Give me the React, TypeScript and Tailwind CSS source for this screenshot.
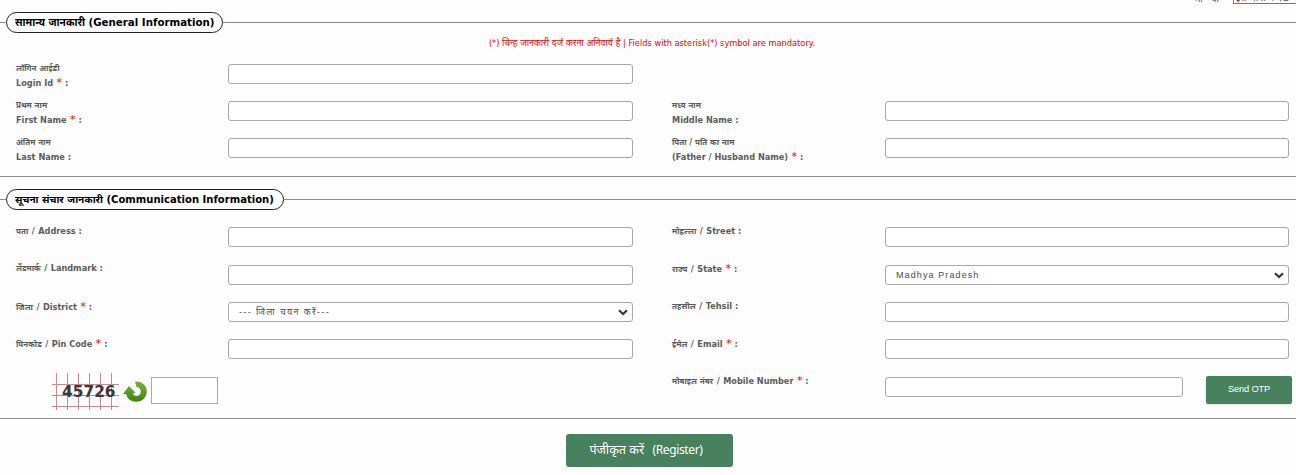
import type { ReactNode } from "react";

const FONT = "font-['DejaVu_Sans','Noto_Sans',sans-serif]";
const ROW = "grid grid-cols-[212px_444px_213px_404px] pl-4";

type LabelProps = {
	hindi: string;
	english: string;
	required?: boolean;
	className?: string;
};

function Mark({ required }: { required?: boolean }) {
	return (
		<>
			{required && (
				<span className="ml-[3.5px] text-[11px] font-normal leading-none text-[#e00]">*</span>
			)}
			{" :"}
		</>
	);
}

function StackedLabel({ hindi, english, required, className = "-mt-[2px]" }: LabelProps) {
	return (
		<label
			className={`flex flex-col whitespace-nowrap text-[8.2px] font-bold text-[#5c5c5c] ${className}`}
		>
			<span className="text-[8px] leading-[14px]">{hindi}</span>
			<span className="-mt-px leading-4">
				{english}
				<Mark required={required} />
			</span>
		</label>
	);
}

function Label({ hindi, english, required, className = "-mt-[4px]" }: LabelProps) {
	return (
		<label
			className={`block whitespace-nowrap text-[8.2px] font-bold leading-4 text-[#5c5c5c] ${className}`}
		>
			<span className="text-[8px]">{hindi}</span>
			<span className="mx-[3.5px]">/</span>
			{english}
			<Mark required={required} />
		</label>
	);
}

function TextInput({ className = "w-[405px]" }: { className?: string }) {
	return (
		<input
			type="text"
			className={`block h-5 rounded-[3px] border border-[#a9a9a9] bg-white ${className}`}
		/>
	);
}

function SelectInput({ className, children }: { className: string; children: ReactNode }) {
	return (
		<div
			className={`flex h-5 items-center justify-between rounded-[3px] border border-[#a9a9a9] bg-white pr-[4px] pl-[10px] ${className}`}
		>
			<span className="whitespace-pre font-['Liberation_Sans','Noto_Sans',sans-serif] text-[9px] leading-none text-[#4a4a4a]">
				{children}
			</span>
			<svg width="10" height="7" viewBox="0 0 10 7" fill="none" stroke="#333" strokeWidth="2">
				<path d="M1 1.2 5 5 9 1.2" />
			</svg>
		</div>
	);
}

function Legend({ className, children }: { className: string; children: ReactNode }) {
	return (
		<div className="flex h-[21px] items-center">
			<div className="h-px w-[6px] bg-[#8c8c8c]" />
			<h2
				className={`flex h-[21px] items-center whitespace-nowrap rounded-full border border-[#222] pl-2 font-bold text-black ${className}`}
			>
				{children}
			</h2>
			<div className="h-px flex-1 bg-[#8c8c8c]" />
		</div>
	);
}

function ReloadIcon() {
	return (
		<svg width="24" height="21" viewBox="0 0 24 21">
			<defs>
				<linearGradient id="reload" x1="0" y1="0" x2="0" y2="1">
					<stop offset="0" stopColor="#7cb342" />
					<stop offset="1" stopColor="#3d8212" />
				</linearGradient>
			</defs>
			<path
				fill="url(#reload)"
				d="M12 .5C19 -.3 23.800 4.500 23.800 10.400S19.300 20.700 13.500 20.700C8 20.700 4.200 17.600 3.200 13.200L0 13 6 5l6.500 6.800-2.700.8c.6 1.500 2 2.300 3.700 2.300 2.500 0 4.300-1.900 4.300-4.400 0-2.600-1.900-4.300-4.300-4.400z"
			/>
		</svg>
	);
}

function Captcha() {
	return (
		<div className="flex h-[38px] items-center pt-[1px] pl-[52px]">
			<div className="relative h-[37px] w-[67px]">
				<svg width="67" height="37" className="block" stroke="#c98a8f" strokeWidth="1">
					<path d="M0 11.500H67M0 22.500H67M0 33.500H67M4.500 0V37M15.500 0V37M26.500 0V37M37.500 0V37M48.500 0V37M59.500 0V37" />
				</svg>
				<span className="absolute top-[10px] left-[10px] text-[15.4px] font-bold leading-[19px] text-[#3a3a3a]">
					45726
				</span>
			</div>
			<div className="ml-1">
				<ReloadIcon />
			</div>
			<input
				type="text"
				className="-mt-[2px] ml-[4px] h-[27px] w-[67px] border border-[#a9a9a9] bg-white"
			/>
		</div>
	);
}

export default function App() {
	return (
		<main className={`h-[475px] w-[1296px] overflow-hidden bg-[#fdfdfd] ${FONT}`}>
			<div className="flex h-3 items-start overflow-hidden pl-[1194px] text-[9px] text-[#444]">
				<span className="-mt-[7px] w-[39px] shrink-0 whitespace-pre leading-3">{"भा   षा"}</span>
				<div className="-mt-[13px] h-[17px] w-[90px] shrink-0 whitespace-nowrap border border-[#777] pt-[4px] pl-[2px] leading-3">
					इस भाषा में देखें
				</div>
			</div>

			<section className="h-[165px] border-b border-[#8c8c8c]">
				<Legend className="w-[217px] text-[10.25px]">सामान्य जानकारी (General Information)</Legend>
				<p className="h-[31px] pt-[4px] pl-[8px] text-center text-[8.25px] leading-[13px] text-[#e00]">
					(*) <span className="text-[8.9px]">चिन्ह जानकारी दर्ज करना अनिवार्य है</span> | Fields with
					asterisk(*) symbol are mandatory.
				</p>
				<div className={`${ROW} h-[37px]`}>
					<StackedLabel hindi="लॉगिन आईडी" english="Login Id" required />
					<TextInput />
				</div>
				<div className={`${ROW} h-[37px]`}>
					<StackedLabel hindi="प्रथम नाम" english="First Name" required />
					<TextInput />
					<StackedLabel hindi="मध्य नाम" english="Middle Name" />
					<TextInput className="w-[404px]" />
				</div>
				<div className={ROW}>
					<StackedLabel hindi="अंतिम नाम" english="Last Name" />
					<TextInput />
					<StackedLabel hindi="पिता / पति का नाम" english="(Father / Husband Name)" required />
					<TextInput className="w-[404px]" />
				</div>
			</section>

			<section className="h-[242px] border-b border-[#8c8c8c] pt-3">
				<Legend className="w-[278px] text-[10.05px]">
					सूचना संचार जानकारी (Communication Information)
				</Legend>
				<div className={`${ROW} mt-[17px] h-[38px]`}>
					<Label hindi="पता" english="Address" />
					<TextInput />
					<Label hindi="मोहल्ला" english="Street" />
					<TextInput className="w-[404px]" />
				</div>
				<div className={`${ROW} h-[37px]`}>
					<Label hindi="लैंडमार्क" english="Landmark" className="-mt-[5px]" />
					<TextInput />
					<Label hindi="राज्य" english="State" required />
					<SelectInput className="w-[404px]">
						<span className="tracking-[1.1px]">Madhya Pradesh</span>
					</SelectInput>
				</div>
				<div className={`${ROW} h-[37px]`}>
					<Label hindi="जिला" english="District" required className="-mt-[3px]" />
					<SelectInput className="w-[405px]">
						<span className="tracking-[1.35px]">--- जिला चयन करें---</span>
					</SelectInput>
					<Label hindi="तहसील" english="Tehsil" />
					<TextInput className="w-[404px]" />
				</div>
				<div className={`${ROW} h-[33px]`}>
					<Label hindi="पिनकोड" english="Pin Code" required className="-mt-[3px]" />
					<TextInput />
					<Label hindi="ईमेल" english="Email" required className="-mt-[3px]" />
					<TextInput className="w-[404px]" />
				</div>
				<div className="grid grid-cols-[672px_213px_321px_86px]">
					<Captcha />
					<Label hindi="मोबाइल नंबर" english="Mobile Number" required className="mt-[1px]" />
					<div className="pt-[5px]">
						<TextInput className="w-[298px]" />
					</div>
					<button
						type="button"
						className="mt-1 h-7 rounded-[2px] bg-[#47815d] font-['Liberation_Sans',sans-serif] text-[9.3px] tracking-[-0.2px] text-white shadow-sm"
					>
						Send OTP
					</button>
				</div>
			</section>

			<button
				type="button"
				className="mt-[15px] ml-[566px] block h-[33px] w-[167px] whitespace-pre rounded-[3px] bg-[#47815d] pr-[7px] font-['Noto_Sans',sans-serif] text-[12px] tracking-[-0.35px] text-white"
			>
				<span className="text-[12.6px] tracking-normal">पंजीकृत करें</span>
				{"   (Register)"}
			</button>
		</main>
	);
}
